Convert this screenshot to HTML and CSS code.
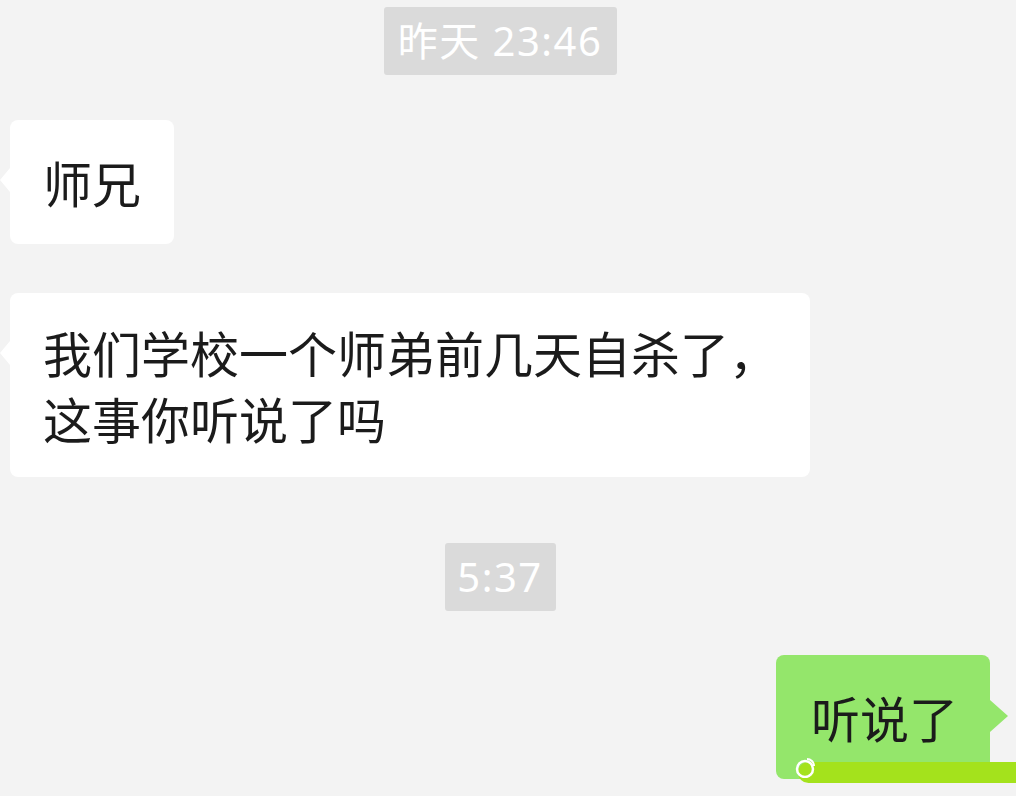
FILE: index.html
```html
<!DOCTYPE html>
<html lang="zh-CN">
<head>
    <meta charset="UTF-8">
    <meta name="viewport" content="width=device-width, initial-scale=1.0">
    <title>聊天记录</title>
    <link rel="stylesheet" href="styles.css">
</head>
<body>
    <div class="chat">
        <div class="time time-first">昨天 23:46</div>
        <div class="row left">
            <div class="bubble">师兄</div>
        </div>
        <div class="row left gap-sm">
            <div class="bubble wide">我们学校一个师弟前几天自杀了，<br>这事你听说了吗</div>
        </div>
        <div class="time time-second">5:37</div>
        <div class="row right">
            <div class="bubble mine">听说了</div>
        </div>
    </div>
    <div class="mark">
        <svg class="mark-logo" width="22" height="22" viewBox="0 0 22 22">
            <circle cx="11" cy="13" r="8" fill="none" stroke="#fff" stroke-width="2.5"/>
            <path d="M13 3 a7 7 0 0 1 7 7" fill="none" stroke="#fff" stroke-width="2"/>
        </svg>
    </div>
</body>
</html>
```

FILE: styles.css
```css
body {
    margin: 0;
    padding: 0;
    background: #f3f3f3;
    font-family: "Noto Sans CJK SC", "Noto Sans", sans-serif;
    color: #1b1b1b;
    overflow: hidden;
    height: 796px;
    position: relative;
}
.chat {
    display: flex;
    flex-direction: column;
    padding: 7px 16px 0 0;
}
.time {
    align-self: center;
    background: #dadada;
    color: #fff;
    font-family: "Noto Sans", "Noto Sans CJK SC", sans-serif;
    font-size: 40px;
    letter-spacing: 1.5px;
    height: 68px;
    line-height: 68px;
    padding: 0 12px;
    border-radius: 3px;
    box-sizing: border-box;
    text-align: center;
}
.time-first {
    width: 233px;
}
.time-second {
    width: 111px;
    margin-top: 66px;
}
.row {
    display: flex;
    margin-top: 45px;
}
.row.gap-sm {
    margin-top: 49px;
}
.row.left {
    padding-left: 10px;
}
.row.right {
    justify-content: flex-end;
    padding-right: 10px;
    margin-top: 44px;
}
.bubble {
    position: relative;
    background: #fff;
    font-size: 49px;
    line-height: 66px;
    padding: 29px 33px;
    border-radius: 8px;
}
.bubble.wide {
    padding: 26px 32px 26px 33px;
}
.left .bubble::before {
    content: "";
    position: absolute;
    left: -10px;
    top: 48px;
    border-top: 12px solid transparent;
    border-bottom: 12px solid transparent;
    border-right: 10px solid #fff;
}
.bubble.mine {
    background: #94e66b;
    padding: 29px 32px 29px 35px;
}
.bubble.mine::after {
    content: "";
    position: absolute;
    right: -18px;
    top: 45px;
    border-top: 16px solid transparent;
    border-bottom: 16px solid transparent;
    border-left: 18px solid #94e66b;
}
.mark {
    position: absolute;
    left: 798px;
    right: 0;
    top: 762px;
    height: 21px;
    background: #a4e21c;
    border-radius: 11px 0 0 11px;
}
.mark-logo {
    position: absolute;
    left: -4px;
    top: -6px;
}
```
